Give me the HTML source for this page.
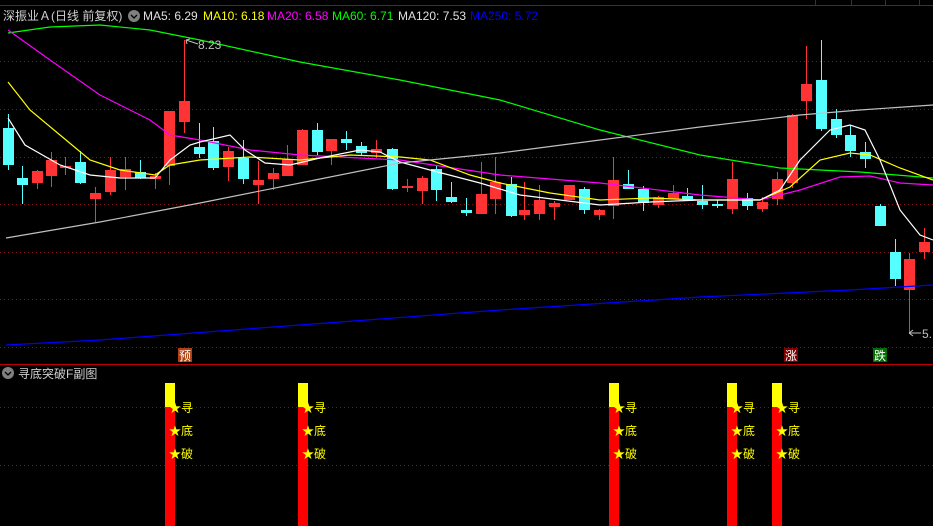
<!DOCTYPE html>
<html><head><meta charset="utf-8"><style>
html,body{margin:0;padding:0;background:#000;width:933px;height:526px;overflow:hidden}
svg{display:block}
text{font-family:"Liberation Sans","Noto Sans CJK SC",sans-serif}
</style></head><body>
<svg id="s" width="933" height="526" xmlns="http://www.w3.org/2000/svg">
<rect width="933" height="526" fill="#000"/>
<line x1="0" y1="5.5" x2="933" y2="5.5" stroke="#b00000"/>
<line x1="815.5" y1="0" x2="815.5" y2="5" stroke="#b00000"/>
<line x1="851.5" y1="0" x2="851.5" y2="5" stroke="#b00000"/>
<line x1="885.5" y1="0" x2="885.5" y2="5" stroke="#b00000"/>
<line x1="919.5" y1="0" x2="919.5" y2="5" stroke="#b00000"/>
<g stroke="#8a1010" stroke-dasharray="1,3">
<line x1="0" y1="61.5" x2="933" y2="61.5"/><line x1="0" y1="109.5" x2="933" y2="109.5"/>
<line x1="0" y1="157.5" x2="933" y2="157.5"/><line x1="0" y1="204.5" x2="933" y2="204.5"/>
<line x1="0" y1="252.5" x2="933" y2="252.5"/><line x1="0" y1="299.5" x2="933" y2="299.5"/>
<line x1="0" y1="347.5" x2="933" y2="347.5"/>
<line x1="0" y1="407.5" x2="933" y2="407.5"/><line x1="0" y1="465.5" x2="933" y2="465.5"/>
</g>
<line x1="0" y1="364.5" x2="933" y2="364.5" stroke="#c00000"/>
<g id="c"></g>
<g fill="none" stroke-width="1.2">
<polyline stroke="#00ff00" points="8,33 50,27 100,25 150,30 200,40 300,62 400,80 500,100 600,130 700,155 780,168 860,172 933,178"/>
<polyline stroke="#ff00ff" points="8,30 50,60 100,95 150,120 170,135 200,140 250,150 300,155 400,160 500,175 600,183 700,195 760,200 800,190 840,177 870,176 900,183 933,185"/>
<polyline stroke="#ffff00" points="8,82 30,110 60,135 90,160 120,170 155,175 170,165 200,160 250,157 300,160 350,155 400,157 430,160 470,175 500,183 550,193 600,200 650,198 700,200 760,200 790,187 820,160 850,153 870,155 900,168 933,180"/>
<polyline stroke="#ffffff" points="8,118 25,145 60,165 90,175 120,178 155,178 170,160 190,145 200,142 230,135 245,150 265,163 290,165 320,158 360,150 380,152 400,162 430,170 480,183 520,195 560,200 600,205 650,202 700,200 760,200 780,190 800,160 830,130 850,125 865,130 880,160 900,210 920,235 933,240"/>
<polyline stroke="#c0c0c0" points="6,238 100,222 200,203 300,183 400,163 500,153 600,140 700,127 800,115 860,110 933,105"/>
<polyline stroke="#0000ff" points="6,345 100,340 300,325 500,310 700,297 850,290 933,285"/>
</g>
<text x="3" y="20" font-size="12" fill="#d0d0d0">深振业Ａ(日线 前复权)</text>
<circle cx="134" cy="16" r="6" fill="#808080"/>
<path d="M131 15 l3 3 l3 -3" stroke="#000" fill="none" stroke-width="1.3"/>
<text x="143" y="20" font-size="12" fill="#e0e0e0">MA5: 6.29</text>
<text x="203" y="20" font-size="12" fill="#ffff00">MA10: 6.18</text>
<text x="267" y="20" font-size="12" fill="#ff00ff">MA20: 6.58</text>
<text x="332" y="20" font-size="12" fill="#00ff00">MA60: 6.71</text>
<text x="398" y="20" font-size="12" fill="#e0e0e0">MA120: 7.53</text>
<text x="470" y="20" font-size="12" fill="#0000ff">MA250: 5.72</text>
<path d="M186 40 l12 4 M186 40 l4 -1 M186 40 l1 4" stroke="#c0c0c0" fill="none"/>
<text x="198" y="49" font-size="12" fill="#c0c0c0">8.23</text>
<path d="M909 333 h12 M909 333 l4 -3 M909 333 l4 3" stroke="#c0c0c0" fill="none"/>
<text x="922" y="338" font-size="12" fill="#c0c0c0">5.</text>
<rect x="178" y="348" width="14" height="14" fill="#b04010"/>
<text x="179" y="360" font-size="12" fill="#fff">预</text>
<rect x="784" y="348" width="14" height="14" fill="#800000"/>
<text x="785" y="360" font-size="12" fill="#fff">涨</text>
<rect x="873" y="348" width="14" height="14" fill="#007000"/>
<text x="874" y="360" font-size="12" fill="#fff">跌</text>
<circle cx="8" cy="373" r="6" fill="#808080"/>
<path d="M5 372 l3 3 l3 -3" stroke="#000" fill="none" stroke-width="1.3"/>
<text x="18" y="378" font-size="12" fill="#d0d0d0">寻底突破F副图</text>
<g id="sub"></g>
</svg>
<script>
var R='#ff3333',C='#55ffff';
var d=[[8,128,165,114,170,C],[22,178,185,166,204,C],[37,171,183,170,189,R],[51,160,176,152,187,R],[65,166,168,157,175,R],[80,162,183,151,184,C],[95,193,199,187,222,R],[110,170,192,157,195,R],[125,169,177,157,190,R],[140,172,178,160,179,C],[155,176,179,173,189,R],[169,111,166,111,185,R],[184,101,122,40,133,R],[199,147,154,123,158,C],[213,141,168,127,170,C],[228,151,167,147,181,R],[243,158,179,140,184,C],[258,180,185,161,204,R],[273,173,179,168,190,R],[287,159,176,145,176,R],[302,130,165,129,165,R],[317,130,152,123,155,C],[331,139,151,139,165,R],[346,139,143,131,150,C],[361,146,153,142,156,C],[376,149,153,140,158,R],[392,149,189,148,190,C],[407,186,188,179,192,R],[422,178,191,176,204,R],[436,169,190,166,201,C],[451,197,202,182,203,C],[466,210,213,198,216,C],[481,194,214,162,214,R],[495,182,199,157,214,R],[511,184,216,177,217,C],[524,210,215,182,220,R],[539,200,214,185,220,R],[554,203,207,201,220,R],[569,185,200,185,200,R],[584,189,210,187,214,C],[599,210,215,209,220,R],[613,180,206,157,219,R],[628,184,189,170,189,C],[643,189,203,186,211,C],[658,197,205,196,208,R],[673,193,199,185,199,R],[687,196,199,188,200,C],[702,201,205,185,209,C],[717,204,206,200,208,C],[732,179,209,162,214,R],[747,198,206,193,210,C],[762,202,209,197,212,R],[777,179,199,172,205,R],[792,115,183,114,188,R],[806,84,101,46,119,R],[821,80,129,40,131,C],[836,119,135,109,138,C],[850,135,151,125,157,C],[865,152,159,142,168,C],[880,206,226,204,226,C],[895,252,279,239,286,C],[909,259,290,253,333,R],[924,242,252,228,259,R]];
var h='';
d.forEach(function(a){h+='<line x1="'+(a[0]+.5)+'" y1="'+a[3]+'" x2="'+(a[0]+.5)+'" y2="'+a[4]+'" stroke="'+a[5]+'"/>';
h+='<rect x="'+(a[0]-5)+'" y="'+a[1]+'" width="11" height="'+Math.max(2,a[2]-a[1])+'" fill="'+a[5]+'"/>';});
document.getElementById('c').innerHTML=h;
var s='';
[165,298,609,727,772].forEach(function(x){
s+='<rect x="'+x+'" y="383" width="10" height="24" fill="#ffff00"/><rect x="'+x+'" y="407" width="10" height="119" fill="#ff0000"/>';
[[407,'寻'],[430,'底'],[453,'破']].forEach(function(t){
s+='<text x="'+(x+4)+'" y="'+(t[0]+5)+'" font-size="12" fill="#ffff00">★'+t[1]+'</text>';});});
document.getElementById('sub').innerHTML=s;
</script>
</body></html>
